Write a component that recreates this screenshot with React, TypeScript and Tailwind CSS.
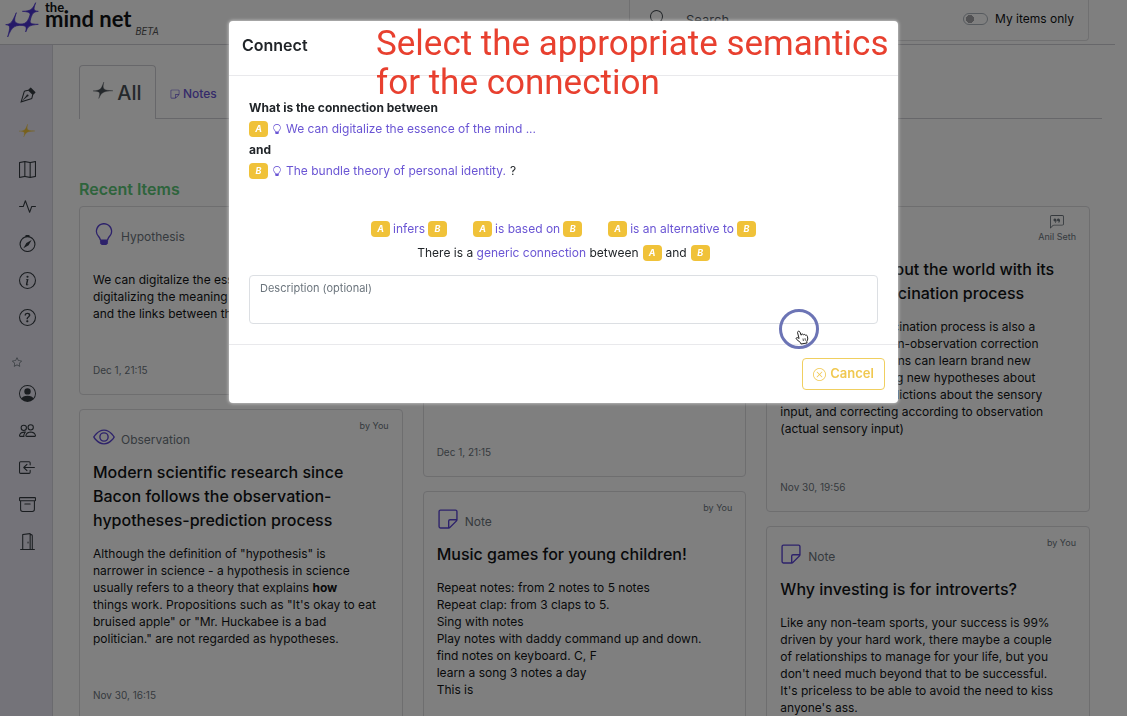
import React, { useState } from 'react';
import type { IconType } from 'react-icons';
import {
  BsActivity,
  BsArchive,
  BsBoxArrowInLeft,
  BsChatLeftQuote,
  BsCompass,
  BsDoorOpen,
  BsEye,
  BsInfoCircle,
  BsLightbulb,
  BsMap,
  BsPeople,
  BsPersonCircle,
  BsQuestionCircle,
  BsSearch,
  BsStar,
  BsSticky,
  BsVectorPen,
  BsXCircle,
} from 'react-icons/bs';

const Spark: React.FC<{ className?: string }> = ({ className }) => (
  <svg viewBox="0 0 63 52" className={className} fill="currentColor" aria-hidden="true">
    <path
      d="M34 0 C29 24 32 26 63 27.500 C31 30 29 31 18 52 C24 31 23 30 0 28 C24 26 25 24 34 0Z"
      stroke="currentColor"
      strokeWidth="1"
    />
  </svg>
);

const Logo = () => (
  <svg
    viewBox="16 8 102 108"
    className="h-9 w-[34px] text-[#4a33d0]"
    fill="currentColor"
    stroke="currentColor"
    strokeWidth="2"
    strokeLinejoin="round"
    aria-hidden="true"
  >
    <path d="M50 40 C40 71 43 74 84 75 C43 78 38 80 24 113 C33 80 32 78 18 76 C34 74 36 71 50 40Z" />
    <path d="M94 40 C86 71 88 74 116 75 C88 78 86 80 78 98 C82 80 80 78 50 77 C80 74 83 71 94 40Z" />
    <path d="M108 10 C100 32 102 34 116 36 C101 38 98 40 90 68 C95 40 93 38 68 36 C94 34 97 32 108 10Z" />
  </svg>
);

interface NavItem {
  label: string;
  icon: IconType;
}

const mainNav: NavItem[] = [
  { label: 'Map', icon: BsMap },
  { label: 'Activity', icon: BsActivity },
  { label: 'Explore', icon: BsCompass },
  { label: 'About', icon: BsInfoCircle },
  { label: 'Help', icon: BsQuestionCircle },
];

const userNav: NavItem[] = [
  { label: 'Profile', icon: BsPersonCircle },
  { label: 'People', icon: BsPeople },
  { label: 'Import', icon: BsBoxArrowInLeft },
  { label: 'Archive', icon: BsArchive },
  { label: 'Log out', icon: BsDoorOpen },
];

const NavLink: React.FC<NavItem> = ({ label, icon: Icon }) => (
  <a href="#" aria-label={label} className="flex h-[37px] items-center pl-[19px] text-[#343a40]">
    <Icon className="size-[17px]" />
  </a>
);

const Sidebar = () => (
  <nav className="w-[53px] shrink-0 border-r border-[#d5d5dc] bg-[#e8e7f3] pt-8">
    <NavLink label="Write" icon={BsVectorPen} />
    <a href="#" aria-label="Home" className="flex h-[37px] items-center pb-1 pl-[19px] text-[#f0c239]">
      <Spark className="w-4" />
    </a>
    {mainNav.map((item) => (
      <NavLink key={item.label} {...item} />
    ))}
    <div className="flex h-[39px] items-center pt-3 pl-3 text-[#6c757d]">
      <BsStar className="size-[10px]" />
    </div>
    {userNav.map((item) => (
      <NavLink key={item.label} {...item} />
    ))}
  </nav>
);

interface CardProps {
  type: string;
  icon: IconType;
  author?: React.ReactNode;
  title?: string;
  date?: string;
  className?: string;
  children?: React.ReactNode;
}

const Card: React.FC<CardProps> = ({ type, icon: Icon, author, title, date, className = '', children }) => (
  <article className={`flex flex-col rounded border border-[#dcdcdf] px-[13px] pb-4 ${className}`}>
    <div className="flex items-start justify-between">
      <div className="flex items-end gap-1.5 pt-4 text-xs leading-4 text-[#6c757d]">
        <Icon className="size-[22px] text-[#5b45d6]" />
        <span>{type}</span>
      </div>
      <div className="pt-2 text-center text-[9px] leading-4 text-[#6c757d]">{author}</div>
    </div>
    {title && <h3 className="mt-3 text-base leading-6 font-medium whitespace-pre-line">{title}</h3>}
    {children && (
      <p className={`text-xs leading-[17px] whitespace-pre-line ${title ? 'mt-[13px]' : 'mt-[26px]'}`}>{children}</p>
    )}
    {date && <time className="mt-auto pt-10 text-[10px] leading-4 text-[#6c757d]">{date}</time>}
  </article>
);

const Badge: React.FC<{ name: 'A' | 'B' }> = ({ name }) => (
  <span className="inline-flex h-4 w-[19px] items-center justify-center rounded bg-[#f0c239] text-[9px] font-bold text-white italic">
    {name}
  </span>
);

const Relation: React.FC<{ label: string }> = ({ label }) => (
  <button type="button" className="flex items-center gap-[3px] text-[#6a55d4]">
    <Badge name="A" />
    {label}
    <Badge name="B" />
  </button>
);

const ConnectModal = () => {
  const [description, setDescription] = useState('');

  return (
    <div className="fixed inset-0 bg-black/50 px-4 pt-[21px]">
      <div
        role="dialog"
        aria-labelledby="connect-title"
        className="relative mx-auto max-w-[669px] rounded bg-white text-xs text-[#212529] shadow-[0_0_3px_1px_rgba(255,255,255,0.45)]"
      >
        <header className="flex h-[55px] items-center border-b border-[#e9e9ec] px-[13px] pb-1.5">
          <h2 id="connect-title" className="text-base font-semibold">
            Connect
          </h2>
        </header>

        <div className="px-5 pt-[21px] pb-5">
          <div className="leading-[21px]">
            <p className="font-bold">What is the connection between</p>
            <p className="flex items-center gap-1">
              <Badge name="A" />
              <BsLightbulb className="size-[10px] text-[#6a55d4]" />
              <a href="#" className="text-[#6a55d4]">
                We can digitalize the essence of the mind ...
              </a>
            </p>
            <p className="font-bold">and</p>
            <p className="flex items-center gap-1">
              <Badge name="B" />
              <BsLightbulb className="size-[10px] text-[#6a55d4]" />
              <a href="#" className="text-[#6a55d4]">
                The bundle theory of personal identity.
              </a>
              ?
            </p>
          </div>

          <div className="mt-9 flex flex-col items-center leading-6">
            <div className="flex gap-[26px]">
              <Relation label="infers" />
              <Relation label="is based on" />
              <Relation label="is an alternative to" />
            </div>
            <div className="flex items-center gap-1">
              <span>
                There is a{' '}
                <button type="button" className="text-[#6a55d4]">
                  generic connection
                </button>{' '}
                between
              </span>
              <Badge name="A" />
              <span>and</span>
              <Badge name="B" />
            </div>
          </div>

          <textarea
            aria-label="Description (optional)"
            placeholder="Description (optional)"
            value={description}
            onChange={(e) => setDescription(e.target.value)}
            className="mt-2.5 block h-[49px] w-full resize-none rounded border border-[#dcdfe3] px-2.5 py-1 text-[11px] leading-4 placeholder:text-[#6c757d]"
          />
        </div>

        <footer className="flex justify-end border-t border-[#e9e9ec] p-[13px]">
          <button
            type="button"
            className="flex h-8 w-[83px] items-center justify-center gap-1 rounded border border-[#f0cf60] text-[13px] font-semibold text-[#f0c850]"
          >
            <BsXCircle className="size-[13px]" />
            Cancel
          </button>
        </footer>

        {/* Tutorial caption */}
        <p className="pointer-events-none absolute top-[3px] left-[147px] font-['Roboto',sans-serif] text-[35px] leading-[39px] whitespace-pre text-[#e8402f]">
          {'Select the appropriate semantics\nfor the connection'}
        </p>

        {/* Pointer highlight */}
        <svg
          viewBox="0 0 42 42"
          className="pointer-events-none absolute top-[287px] left-[549px] size-[42px]"
          fill="none"
          aria-hidden="true"
        >
          <circle cx="21" cy="21" r="18.5" stroke="#6c74b5" strokeWidth="3" />
          <path
            d="M19.5 24.5c0-1.5 2-1.8 2.5-.3l1.2 3 .1-.8c1-.8 2-.2 2.200.500.6-.8 1.800-.5 2 .4.8-.4 1.800 0 1.900 1l.4 2.700-1 2.500.2 1.500-6 1-.5-1.400-4-3.300c-1-1.200.3-2.300 1.600-1.400l1 .6z"
            fill="#fff"
            stroke="#222"
            strokeWidth="1"
          />
          <path d="M25 30.500l.4 2.500M27 30.200l.4 2.500" stroke="#222" strokeWidth=".8" />
        </svg>
      </div>
    </div>
  );
};

export default function App() {
  const [mineOnly, setMineOnly] = useState(false);

  return (
    <div className="flex h-screen flex-col overflow-hidden bg-white font-['Inter',sans-serif] text-[#111315]">
      <header className="mr-3 flex h-[45px] shrink-0 items-start justify-between border-b border-[#cfcfd4] pr-[26px] pl-[5px]">
        <a href="#" className="flex items-end gap-1 pt-0.5 font-['Lato',sans-serif] font-bold">
          <Logo />
          <span className="flex flex-col self-start pl-0.5">
            <span className="text-[13px] leading-[11px]">the</span>
            <span className="text-[22px] leading-[11px]">mind net</span>
          </span>
          <span className="font-['Roboto',sans-serif] text-[10px] leading-3 font-normal text-[#555] italic">BETA</span>
        </a>
        <div className="flex h-[41px] w-[460px] items-center gap-5 rounded-b border border-t-0 border-[#e0e0e3] px-[14px] pb-1">
          <BsSearch className="ml-1.5 size-4 text-[#495057]" />
          <input aria-label="Search" placeholder="Search" className="w-60 pt-1.5 text-[13px] placeholder:text-[#495057]" />
          <label className="ml-auto flex items-center gap-[7px] pt-0.5 text-xs">
            <input
              type="checkbox"
              role="switch"
              checked={mineOnly}
              onChange={(e) => setMineOnly(e.target.checked)}
              className="h-3 w-[25px] appearance-none rounded-full border border-[#adb5bd] bg-[radial-gradient(circle_at_6px_5px,#a5a5a8_4px,transparent_4px)]"
            />
            My items only
          </label>
        </div>
      </header>

      <div className="flex min-h-0 flex-1">
        <Sidebar />
        <main className="min-w-0 flex-1 pt-5 pr-[37px] pl-[26px]">
          <div className="-mr-3 flex">
            <button
              type="button"
              className="flex h-[54px] w-[77px] items-center justify-center gap-1 rounded-t border border-b-0 border-[#cfcfd4] text-xl font-medium text-[#495057]"
            >
              <Spark className="mb-1 w-5" />
              All
            </button>
            <button
              type="button"
              className="flex flex-1 items-center gap-[3px] border-b border-[#cfcfd4] pt-1 pl-[14px] text-xs font-medium text-[#6a55d4]"
            >
              <BsSticky className="size-[10px]" />
              Notes
            </button>
          </div>

          <h2 className="mt-[58px] text-base leading-6 font-semibold text-[#5cc878]">Recent Items</h2>

          <div className="mt-[5px] grid grid-cols-3 items-start gap-5">
            <div className="flex flex-col gap-[14px]">
              <Card type="Hypothesis" icon={BsLightbulb} date="Dec 1, 21:15" className="min-h-[189px]">
                {'We can digitalize the essence of the mind by\ndigitalizing the meaning of the concepts\nand the links between them.'}
              </Card>
              <Card
                type="Observation"
                icon={BsEye}
                author="by You"
                date="Nov 30, 16:15"
                title={'Modern scientific research since\nBacon follows the observation-\nhypotheses-prediction process'}
              >
                {'Although the definition of "hypothesis" is\nnarrower in science - a hypothesis in science\nusually refers to a theory that explains '}
                <b>how</b>
                {'\nthings work. Propositions such as "It\'s okay to eat\nbruised apple" or "Mr. Huckabee is a bad\npolitician." are not regarded as hypotheses.'}
              </Card>
            </div>

            <div className="flex flex-col gap-[14px]">
              <Card
                type="Hypothesis"
                icon={BsLightbulb}
                title="The bundle theory of personal identity."
                date="Dec 1, 21:15"
                className="min-h-[271px]"
              />
              <Card
                type="Note"
                icon={BsSticky}
                author="by You"
                title="Music games for young children!"
                className="min-h-[271px]"
              >
                {'Repeat notes: from 2 notes to 5 notes\nRepeat clap: from 3 claps to 5.\nSing with notes\nPlay notes with daddy command up and down.\nfind notes on keyboard. C, F\nlearn a song 3 notes a day\nThis is'}
              </Card>
            </div>

            <div className="flex flex-col gap-[14px]">
              <Card
                type="Observation"
                icon={BsEye}
                author={
                  <>
                    <BsChatLeftQuote className="mx-auto size-[14px]" />
                    Anil Seth
                  </>
                }
                title={'Brain learns about the world with its\ncontrolled hallucination process'}
                date="Nov 30, 19:56"
                className="min-h-[306px]"
              >
                {'The controlled hallucination process is also a\nhypothesis-prediction-observation correction\nprocess. Human brains can learn brand new\nobjects by generating new hypotheses about\nthe outer world, predictions about the sensory\ninput, and correcting according to observation\n(actual sensory input)'}
              </Card>
              <Card
                type="Note"
                icon={BsSticky}
                author="by You"
                title="Why investing is for introverts?"
                className="min-h-[271px]"
              >
                {"Like any non-team sports, your success is 99%\ndriven by your hard work, there maybe a couple\nof relationships to manage for your life, but you\ndon't need much beyond that to be successful.\nIt's priceless to be able to avoid the need to kiss\nanyone's ass."}
              </Card>
            </div>
          </div>
        </main>
      </div>

      <ConnectModal />
    </div>
  );
}
